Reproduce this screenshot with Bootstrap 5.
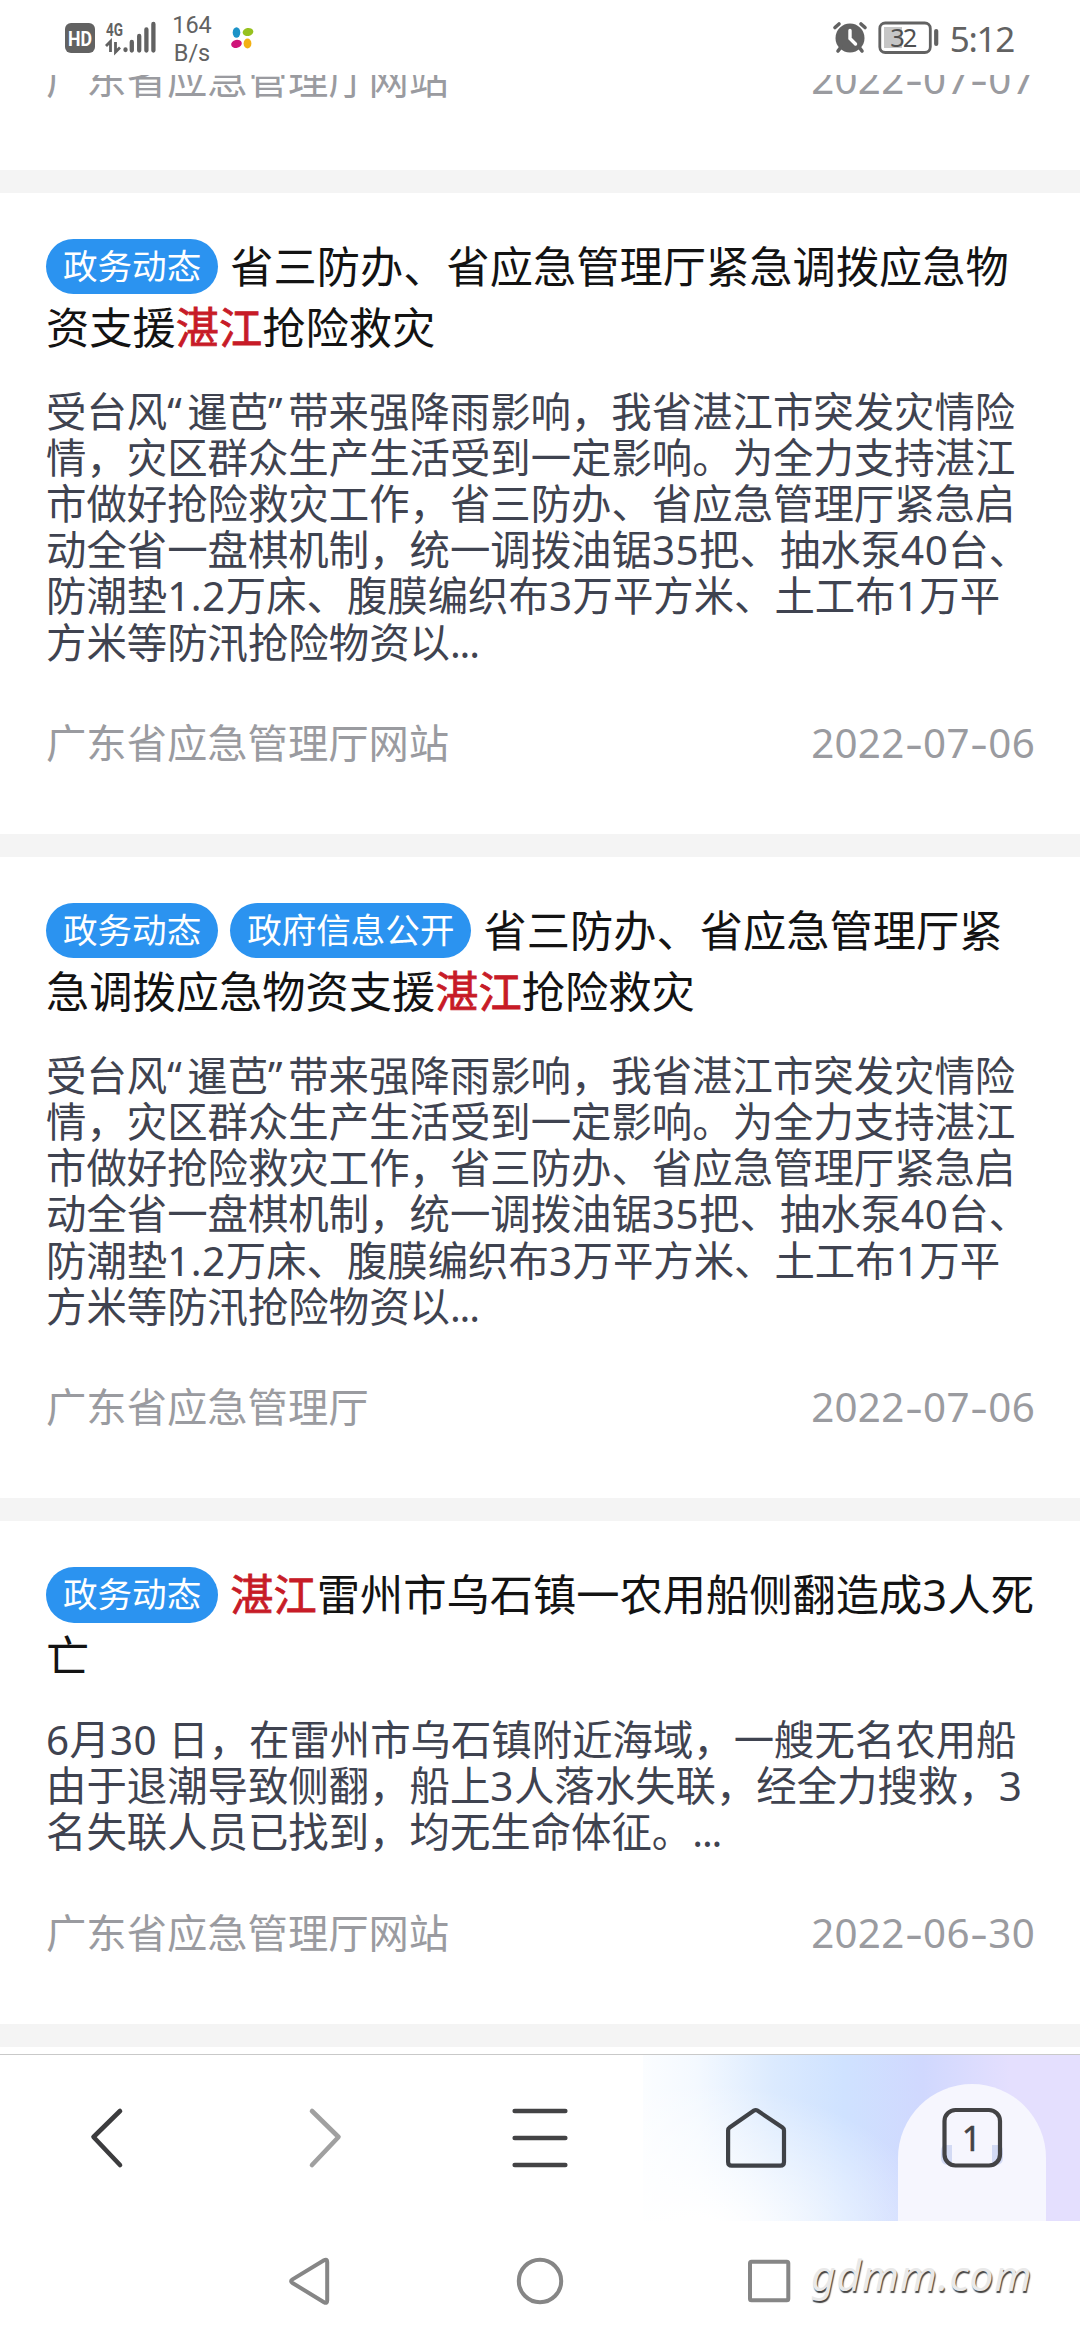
<!DOCTYPE html>
<html lang="zh-CN">
<head>
<meta charset="utf-8">
<meta name="viewport" content="width=device-width, initial-scale=1">
<title>湛江 - 搜索结果</title>
<link href="https://cdn.jsdelivr.net/npm/bootstrap@5.3.0/dist/css/bootstrap.min.css" rel="stylesheet">
<style>
body{font-family:"Noto Sans","Noto Sans CJK SC",sans-serif;background:#fff;color:#131313}
svg{display:block;flex:none}
.screen{width:1080px;height:2340px}
.status-bar{height:75px;padding:0 66px 0 65px;color:#626262}
.net-speed{font:23.5px/27.5px Roboto,sans-serif;margin-left:16px;width:40px;padding-top:1px}
.clock{font-size:35px;line-height:38px;letter-spacing:-1.3px;margin-left:10px}
.results{height:1979px;background:#fff}
.result{padding:44px 46px 68.5px;border-bottom:23px solid #f4f4f4;flex:none}
.result.cut{height:118px;padding-top:0}
.r-title{font-size:43.25px;line-height:60.5px;height:121px;font-weight:400;white-space:nowrap}
.r-title em{font-style:normal;color:#c71b27;-webkit-text-stroke:.8px #c71b27}
.tag{display:inline-block;background:#2b93f0;color:#fff;font-size:34.56px;line-height:54px;height:55.5px;padding:0 17px;border-radius:28px;vertical-align:middle;margin:-4px 12px 0 0;position:relative;top:-3px}
.r-body{font-size:40.4px;line-height:46.2px;color:#3f4350;margin-top:30.5px;white-space:nowrap}
.q{letter-spacing:5.6px}
.n{letter-spacing:.5px}
.dots{letter-spacing:-1.2px}
.r-meta{font-size:40.32px;line-height:46px;color:#9a9ba0;margin-top:54px}
.r-date{letter-spacing:.3px;margin-right:-1px}
.r-date i{font-style:normal;display:inline-block;width:18.5px;text-align:center;transform:scaleX(1.35)}
.toolbar{height:167px;border-top:1px solid #c9c9c9}
.toolbar-bg{background:radial-gradient(ellipse 56% 95% at 12% 112%,#fff 15%,rgba(255,255,255,0) 100%),linear-gradient(90deg,#fbfdff 0,#f4f9ff 12%,#dbeafe 30%,#cfe2ff 46%,#d0d8fe 64%,#e4dffe 84%);left:643px;right:0;top:0;bottom:0}
.arch{left:898px;width:148px;top:29px;bottom:0;border-radius:75px 75px 0 0;background:#f6f6fe}
.tool{width:216px}
.sysnav{height:119px}
.watermark{font:italic 42.5px/48px "Noto Sans",sans-serif;letter-spacing:.8px;color:#e9e9e9;text-shadow:1px 1.5px 1px #444;left:811px;top:30px}
</style>
</head>
<body>
<div class="screen d-flex flex-column overflow-hidden position-relative">
  <header class="status-bar d-flex align-items-start flex-none">
    <svg width="91" height="75" viewBox="65 0 91 75" fill="#626262">
      <rect x="65" y="23" width="30" height="30" rx="6"/>
      <text x="80" y="45.5" font-family="Roboto" font-weight="700" font-size="20" fill="#fff" text-anchor="middle" textLength="24" lengthAdjust="spacingAndGlyphs">HD</text>
      <text x="106" y="35.5" font-family="Roboto" font-weight="700" font-size="18.5" textLength="17" lengthAdjust="spacingAndGlyphs">4G</text>
      <path d="M106 46l4.500-4.500V52M115.500 42v10l4.500-4.500" fill="none" stroke="#626262" stroke-width="2.800"/>
      <path d="M125.500 49.500v.5M131.800 42v8.500M139.200 36v14.500M146.400 29.500v21M153.400 24v26.500" fill="none" stroke="#626262" stroke-width="4.300" stroke-linecap="round"/>
    </svg>
    <div class="net-speed text-center mt-2 pt-1">164<br>B/s</div>
    <svg class="ms-3" width="26" height="75" viewBox="228 0 26 75">
      <ellipse cx="236.500" cy="32.500" rx="3.800" ry="5.200" fill="#1c93c8"/>
      <ellipse cx="248" cy="32" rx="5.400" ry="4" fill="#97c11f" transform="rotate(-12 248 32)"/>
      <ellipse cx="236.500" cy="44" rx="5.400" ry="4" fill="#cf1479" transform="rotate(-12 236 44)"/>
      <ellipse cx="247.500" cy="43.500" rx="3.900" ry="5" fill="#f3b012"/>
    </svg>
    <svg class="ms-auto" width="108" height="75" viewBox="831 0 108 75" fill="none" stroke="#626262">
      <circle cx="849" cy="38" r="14.500" fill="#626262" stroke="none"/>
      <path d="M834 27.500l4-3.500M864 27.500l-4-3.500M837 51l3-4M861 51l-3-4" stroke-width="3.600" stroke-linecap="round"/>
      <path d="M849 30.500v8l5.500 5.500" stroke="#fff" stroke-width="3.400" stroke-linecap="round"/>
      <rect x="883" y="27" width="18" height="21" fill="#c6c6c6" stroke="none"/>
      <rect x="878.800" y="23" width="50.500" height="29.500" rx="5.500" stroke-width="2.800"/>
      <path d="M935.200 31v13" stroke-width="4.200" stroke-linecap="round"/>
      <text x="902.800" y="47" font-family="Noto Sans" font-size="25.500" fill="#505050" stroke="none" text-anchor="middle" textLength="27">32</text>
    </svg>
    <div class="clock pt-3 mt-1">5:12</div>
  </header>

  <main class="results overflow-hidden d-flex flex-column">
    <article class="result cut d-flex flex-column justify-content-end overflow-hidden">
      <div class="r-meta d-flex justify-content-between mt-0 flex-shrink-0"><span>广东省应急管理厅网站</span><span class="r-date">2022<i>-</i>07<i>-</i>07</span></div>
    </article>
    <article class="result">
      <h2 class="r-title m-0"><span class="tag">政务动态</span>省三防办、省应急管理厅紧急调拨应急物<br>资支援<em>湛江</em>抢险救灾</h2>
      <p class="r-body mb-0">受台风<span class="q">“</span>暹芭<span class="q">”</span>带来强降雨影响，我省湛江市突发灾情险<br>情，灾区群众生产生活受到一定影响。为全力支持湛江<br>市做好抢险救灾工作，省三防办、省应急管理厅紧急启<br>动全省一盘棋机制，统一调拨油锯<span class="n">35</span>把、抽水泵<span class="n">40</span>台、<br>防潮垫<span class="n">1.2</span>万床、腹膜编织布<span class="n">3</span>万平方米、土工布<span class="n">1</span>万平<br>方米等防汛抢险物资以<span class="dots">...</span></p>
      <div class="r-meta d-flex justify-content-between"><span>广东省应急管理厅网站</span><span class="r-date">2022<i>-</i>07<i>-</i>06</span></div>
    </article>
    <article class="result">
      <h2 class="r-title m-0"><span class="tag">政务动态</span><span class="tag">政府信息公开</span>省三防办、省应急管理厅紧<br>急调拨应急物资支援<em>湛江</em>抢险救灾</h2>
      <p class="r-body mb-0">受台风<span class="q">“</span>暹芭<span class="q">”</span>带来强降雨影响，我省湛江市突发灾情险<br>情，灾区群众生产生活受到一定影响。为全力支持湛江<br>市做好抢险救灾工作，省三防办、省应急管理厅紧急启<br>动全省一盘棋机制，统一调拨油锯<span class="n">35</span>把、抽水泵<span class="n">40</span>台、<br>防潮垫<span class="n">1.2</span>万床、腹膜编织布<span class="n">3</span>万平方米、土工布<span class="n">1</span>万平<br>方米等防汛抢险物资以<span class="dots">...</span></p>
      <div class="r-meta d-flex justify-content-between"><span>广东省应急管理厅</span><span class="r-date">2022<i>-</i>07<i>-</i>06</span></div>
    </article>
    <article class="result">
      <h2 class="r-title m-0"><span class="tag">政务动态</span><em>湛江</em>雷州市乌石镇一农用船侧翻造成<span class="n">3</span>人死<br>亡</h2>
      <p class="r-body mb-0"><span class="n">6</span>月<span class="n">30 </span>日，在雷州市乌石镇附近海域，一艘无名农用船<br>由于退潮导致侧翻，船上<span class="n">3</span>人落水失联，经全力搜救，<span class="n">3</span><br>名失联人员已找到，均无生命体征。<span class="dots">...</span></p>
      <div class="r-meta d-flex justify-content-between"><span>广东省应急管理厅网站</span><span class="r-date">2022<i>-</i>06<i>-</i>30</span></div>
    </article>
  </main>

  <nav class="toolbar d-flex position-relative">
    <div class="toolbar-bg position-absolute"></div>
    <div class="arch position-absolute"></div>
    <svg class="tool position-relative" height="166" viewBox="0 2055 216 166" fill="none" stroke="#3c3c3e" stroke-width="4.600" stroke-linecap="round" stroke-linejoin="round"><path d="M120 2111L93.500 2137 120 2165"/></svg>
    <svg class="tool position-relative" height="166" viewBox="216 2055 216 166" fill="none" stroke="#a0a0a0" stroke-width="4.600" stroke-linecap="round" stroke-linejoin="round"><path d="M312 2111l26.500 26L312 2165"/></svg>
    <svg class="tool position-relative" height="166" viewBox="432 2055 216 166" fill="none" stroke="#434345" stroke-width="4.600" stroke-linecap="round"><path d="M514.700 2111h50.600M514.700 2138h50.600M514.700 2165h50.600"/></svg>
    <svg class="tool position-relative" height="166" viewBox="648 2055 216 166" fill="none" stroke="#3f4247" stroke-width="4.200" stroke-linejoin="round"><path d="M754 2110.600q1.700-1.100 3.400 0L782.500 2127.500q1.500 1.100 1.500 3V2162q0 3.700-3.700 3.700H731.800q-3.700 0-3.700-3.700V2130.500q0-1.900 1.500-3z"/></svg>
    <svg class="tool position-relative" height="166" viewBox="864 2055 216 166">
      <path d="M941 2151q0-6 5-6h6v20h-4q-7 0-7-7zM1003 2151q0-6-5-6h-6v20h4q7 0 7-7z" fill="#d3daf4"/>
      <rect x="944.500" y="2110" width="55.500" height="55.500" rx="11" fill="none" stroke="#434345" stroke-width="4.200"/>
      <text x="971.500" y="2151" text-anchor="middle" font-family="Noto Sans" font-size="34" font-weight="400" fill="#434345" stroke="#434345" stroke-width=".5">1</text>
    </svg>
  </nav>

  <footer class="sysnav position-relative d-flex">
    <svg width="1080" height="119" viewBox="0 2221 1080 119" fill="none" stroke="#868686" stroke-width="4" stroke-linejoin="round">
      <path d="M324 2260.300q3.200-1.800 3.200 1.700v38.500q0 3.500-3.200 1.700L292.500 2283q-2.800-1.800 0-3.600z"/>
      <circle cx="540" cy="2281" r="21.200"/>
      <rect x="750" y="2261.700" width="38.300" height="38.600" rx="1.500"/>
    </svg>
    <div class="watermark position-absolute">gdmm.com</div>
  </footer>
</div>
<script src="https://cdn.jsdelivr.net/npm/bootstrap@5.3.0/dist/js/bootstrap.bundle.min.js"></script>
</body>
</html>
